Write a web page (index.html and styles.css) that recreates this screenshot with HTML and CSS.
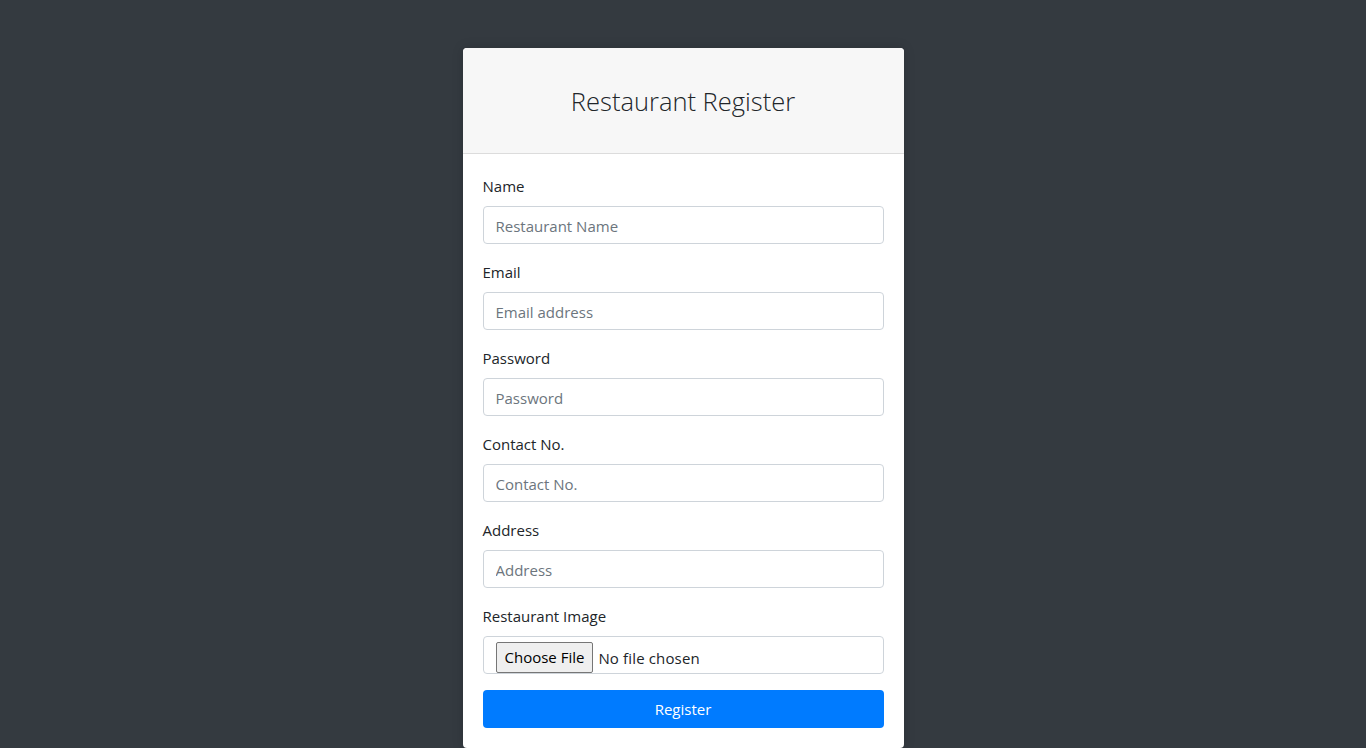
FILE: index.html
```html
<!DOCTYPE html>
<html lang="en">
<head>
<meta charset="utf-8">
<title>Restaurant Register</title>
<link rel="stylesheet" href="styles.css">
</head>
<body>
<main class="page">
  <div class="card">
    <div class="card-header">
      <h3 class="title">Restaurant Register</h3>
    </div>
    <form class="card-body">
      <div class="form-group">
        <label class="label">Name</label>
        <input class="form-control" type="text" placeholder="Restaurant Name">
      </div>
      <div class="form-group">
        <label class="label">Email</label>
        <input class="form-control" type="email" placeholder="Email address">
      </div>
      <div class="form-group">
        <label class="label">Password</label>
        <input class="form-control" type="password" placeholder="Password">
      </div>
      <div class="form-group">
        <label class="label">Contact No.</label>
        <input class="form-control" type="text" placeholder="Contact No.">
      </div>
      <div class="form-group">
        <label class="label">Address</label>
        <input class="form-control" type="text" placeholder="Address">
      </div>
      <div class="form-group">
        <label class="label">Restaurant Image</label>
        <div class="form-control file-control">
          <span class="file-btn">Choose File</span>
          <span class="file-text">No file chosen</span>
        </div>
      </div>
      <button class="btn-primary" type="button">Register</button>
    </form>
  </div>
</main>
</body>
</html>
```

FILE: styles.css
```css
* { box-sizing: border-box; }
html, body { margin: 0; padding: 0; }
body {
  background: #343a40;
  font-family: "Open Sans", "Noto Sans", "Liberation Sans", sans-serif;
  font-size: 15px;
  color: #212529;
  height: 748px;
  overflow: hidden;
}
.page {
  display: flex;
  justify-content: center;
  padding-top: 48px;
}
.card {
  width: 441px;
  background: #fff;
  border-radius: 4px;
  overflow: hidden;
  box-shadow: 0 0 12px rgba(0,0,0,0.15);
}
.card-header {
  background: #f7f7f7;
  border-bottom: 1px solid #dcdcdc;
  height: 106px;
  display: flex;
  align-items: center;
  justify-content: center;
}
.title {
  margin: 0;
  font-weight: 300;
  font-size: 25.5px;
  color: #212529;
  letter-spacing: 0;
}
.card-body {
  padding: 20px 20px 20px;
  display: flex;
  flex-direction: column;
}
.form-group {
  display: flex;
  flex-direction: column;
  margin-bottom: 16px;
}
.label {
  line-height: 24px;
  margin-bottom: 8px;
  font-size: 15px;
  color: #212529;
}
.form-control {
  height: 38px;
  border: 1px solid #ced4da;
  border-radius: 4px;
  padding: 7px 12px 5px;
  font-family: inherit;
  font-size: 15px;
  color: #495057;
  background: #fff;
  outline: none;
}
.form-control::placeholder { color: #6c757d; }
.file-control {
  display: flex;
  align-items: flex-end;
  padding: 6px 12px 0 12px;
}
.file-btn {
  display: inline-block;
  height: 31px;
  line-height: 29px;
  padding: 0 8px;
  border: 1px solid #767676;
  border-radius: 2px;
  background: #efefef;
  color: #000;
  font-size: 15px;
}
.file-text {
  margin-left: 5px;
  line-height: 28px;
  color: #212529;
  font-size: 15px;
  letter-spacing: 0.15px;
  margin-bottom: 1px;
}
.btn-primary {
  height: 38px;
  border: none;
  border-radius: 4px;
  background: #007bff;
  color: #fff;
  font-family: inherit;
  font-size: 15px;
  cursor: pointer;
}
```
